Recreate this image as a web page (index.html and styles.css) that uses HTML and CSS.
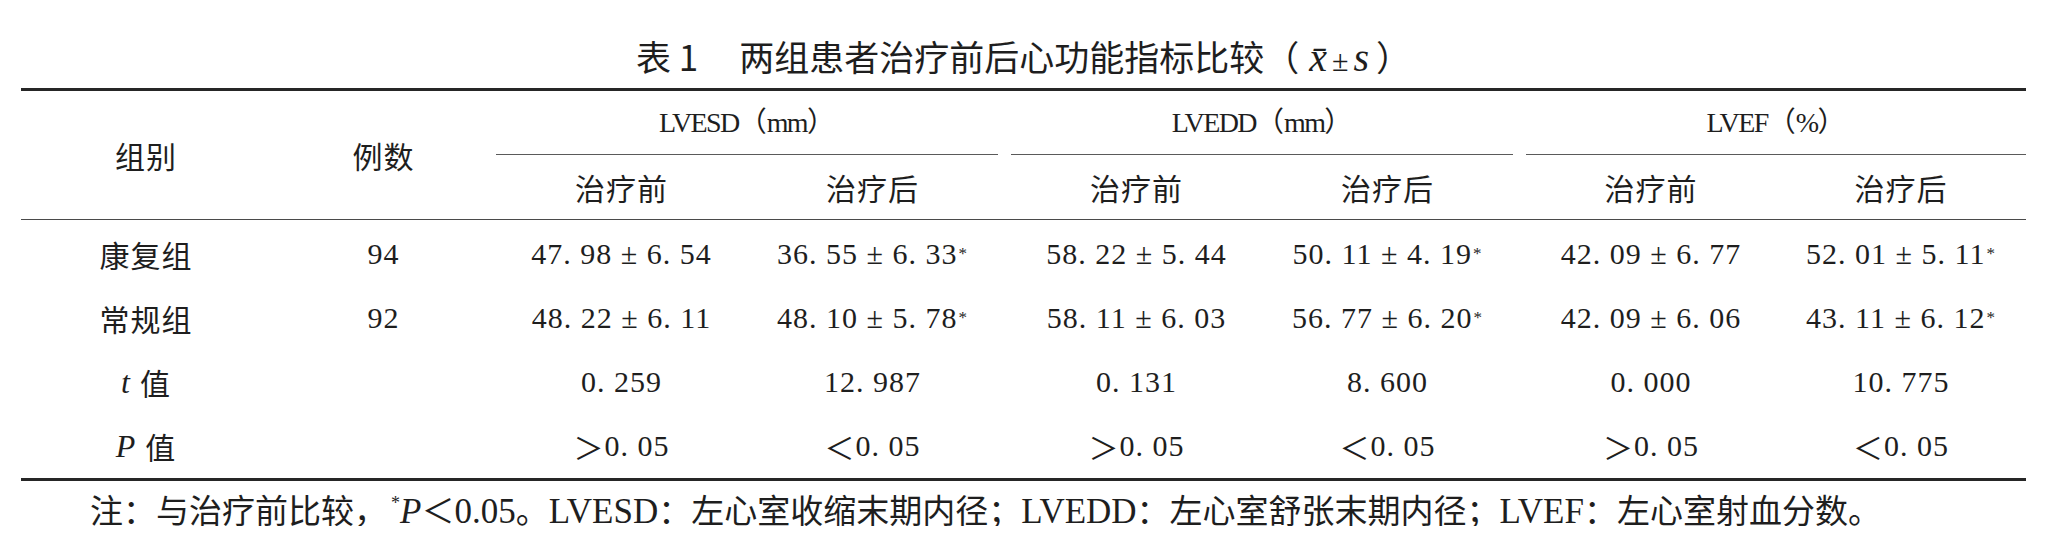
FILE: index.html
```html
<!DOCTYPE html>
<html lang="zh-CN">
<head>
<meta charset="utf-8">
<title>表1 两组患者治疗前后心功能指标比较</title>
<link rel="stylesheet" href="styles.css">
</head>
<body>
<div class="doc">
  <h1 class="title">表 1<span class="tsp"></span>两组患者治疗前后心功能指标比较（<i class="math mx">x&#772;</i><span class="pm">±</span><i class="math ms">s</i>）</h1>
  <div class="table">
    <div class="thead">
      <div class="c1 cn">组别</div>
      <div class="c2 cn">例数</div>
      <div class="grp">
        <div class="glabel"><span class="lat">LVESD</span>（<span class="lat">mm</span>）</div>
        <div class="gsub"><div class="cell cn">治疗前</div><div class="cell cn">治疗后</div></div>
      </div>
      <div class="grp">
        <div class="glabel"><span class="lat">LVEDD</span>（<span class="lat">mm</span>）</div>
        <div class="gsub"><div class="cell cn">治疗前</div><div class="cell cn">治疗后</div></div>
      </div>
      <div class="grp last">
        <div class="glabel"><span class="lat">LVEF</span>（<span class="lat">%</span>）</div>
        <div class="gsub"><div class="cell cn">治疗前</div><div class="cell cn">治疗后</div></div>
      </div>
    </div>
    <div class="tbody">
      <div class="row">
        <div class="c1 cn">康复组</div>
        <div class="c2 num">94</div>
        <div class="grp"><div class="cell num">47. 98 ± 6. 54</div><div class="cell num">36. 55 ± 6. 33<sup class="ast">*</sup></div></div>
        <div class="grp"><div class="cell num">58. 22 ± 5. 44</div><div class="cell num">50. 11 ± 4. 19<sup class="ast">*</sup></div></div>
        <div class="grp last"><div class="cell num">42. 09 ± 6. 77</div><div class="cell num">52. 01 ± 5. 11<sup class="ast">*</sup></div></div>
      </div>
      <div class="row">
        <div class="c1 cn">常规组</div>
        <div class="c2 num">92</div>
        <div class="grp"><div class="cell num">48. 22 ± 6. 11</div><div class="cell num">48. 10 ± 5. 78<sup class="ast">*</sup></div></div>
        <div class="grp"><div class="cell num">58. 11 ± 6. 03</div><div class="cell num">56. 77 ± 6. 20<sup class="ast">*</sup></div></div>
        <div class="grp last"><div class="cell num">42. 09 ± 6. 06</div><div class="cell num">43. 11 ± 6. 12<sup class="ast">*</sup></div></div>
      </div>
      <div class="row">
        <div class="c1"><i class="var">t</i><span class="cn sp">值</span></div>
        <div class="c2"></div>
        <div class="grp"><div class="cell num">0. 259</div><div class="cell num">12. 987</div></div>
        <div class="grp"><div class="cell num">0. 131</div><div class="cell num">8. 600</div></div>
        <div class="grp last"><div class="cell num">0. 000</div><div class="cell num">10. 775</div></div>
      </div>
      <div class="row">
        <div class="c1"><i class="var">P</i><span class="cn sp">值</span></div>
        <div class="c2"></div>
        <div class="grp"><div class="cell num"><span class="cmp">＞</span>0. 05</div><div class="cell num"><span class="cmp">＜</span>0. 05</div></div>
        <div class="grp"><div class="cell num"><span class="cmp">＞</span>0. 05</div><div class="cell num"><span class="cmp">＜</span>0. 05</div></div>
        <div class="grp last"><div class="cell num"><span class="cmp">＞</span>0. 05</div><div class="cell num"><span class="cmp">＜</span>0. 05</div></div>
      </div>
    </div>
  </div>
  <p class="note">注：与治疗前比较，<sup class="nast">*</sup><i class="nvar">P</i>＜<span class="nlat">0.05</span>。<span class="nlat">LVESD</span>：左心室收缩末期内径；<span class="nlat">LVEDD</span>：左心室舒张末期内径；<span class="nlat">LVEF</span>：左心室射血分数。</p>
</div>
</body>
</html>
```

FILE: styles.css
```css
html, body {
  margin: 0;
  padding: 0;
  background: #ffffff;
}

body {
  color: #1e1e1e;
  font-family: "Liberation Serif", "Noto Sans CJK SC", serif;
}

.doc {
  padding: 0 22px 0 21px;
}

/* ---------- title ---------- */
.title {
  margin: 0 0 15px 0;
  padding: 38px 0 0 0;
  height: 35px;
  font-family: "Noto Sans CJK SC", sans-serif;
  font-size: 35px;
  line-height: 35px;
  font-weight: 400;
  text-align: center;
  color: #1e1e1e;
}

.tsp {
  display: inline-block;
  width: 41px;
}

.title .math {
  font-family: "Liberation Serif", serif;
  font-style: italic;
  font-size: 40px;
  line-height: 0;
}

.title .mx {
  margin-left: 10px;
}

.title .ms {
  margin-right: 7px;
}

.title .pm {
  font-family: "Liberation Serif", serif;
  font-size: 30px;
  line-height: 0;
  margin: 0 5px;
}

/* ---------- table ---------- */
.table {
  border-top: 3px solid #262626;
  border-bottom: 3px solid #262626;
  font-size: 30px;
  line-height: 30px;
}

.thead {
  display: flex;
  border-bottom: 1px solid #4a4a4a;
}

.tbody {
  padding-top: 2px;
}

.row {
  display: flex;
  height: 64px;
}

.c1,
.c2,
.cell {
  display: flex;
  align-items: center;
  justify-content: center;
  white-space: nowrap;
}

.c1 {
  width: 250px;
  flex: none;
}

.c2 {
  width: 225px;
  flex: none;
}

.grp {
  display: flex;
  width: 502px;
  flex: none;
  margin-right: 13px;
}

.grp.last {
  width: 500px;
  margin-right: 0;
}

.cell {
  flex: 1 1 0;
}

.num {
  letter-spacing: 1px;
}

.thead .grp {
  flex-direction: column;
}

.glabel {
  height: 63px;
  border-bottom: 1px solid #5a5a5a;
  display: flex;
  align-items: center;
  justify-content: center;
  font-size: 28px;
}

.glabel .lat {
  letter-spacing: -1.6px;
}

.gsub {
  display: flex;
  height: 64px;
}

.cn {
  font-family: "Noto Sans CJK SC", sans-serif;
  letter-spacing: 1px;
}

.sp {
  margin-left: 10px;
}

.var {
  font-family: "Liberation Serif", serif;
  font-style: italic;
  font-size: 32px;
  line-height: 0;
}

.cmp {
  font-family: "Noto Sans CJK SC", sans-serif;
  line-height: 0;
}

.ast {
  font-size: 17px;
  line-height: 0;
  vertical-align: 11px;
  margin-left: 1px;
}

/* ---------- note ---------- */
.note {
  margin: 11px 0 0 0;
  padding-left: 69px;
  font-family: "Noto Sans CJK SC", sans-serif;
  font-size: 33px;
  line-height: 34px;
  white-space: nowrap;
}

.nlat {
  font-family: "Liberation Serif", serif;
  font-size: 35px;
  line-height: 0;
}

.nvar {
  font-family: "Liberation Serif", serif;
  font-style: italic;
  font-size: 35px;
  line-height: 0;
}

.nast {
  font-family: "Liberation Serif", serif;
  font-size: 18px;
  line-height: 0;
  vertical-align: 14px;
  margin-left: 4px;
}
```
